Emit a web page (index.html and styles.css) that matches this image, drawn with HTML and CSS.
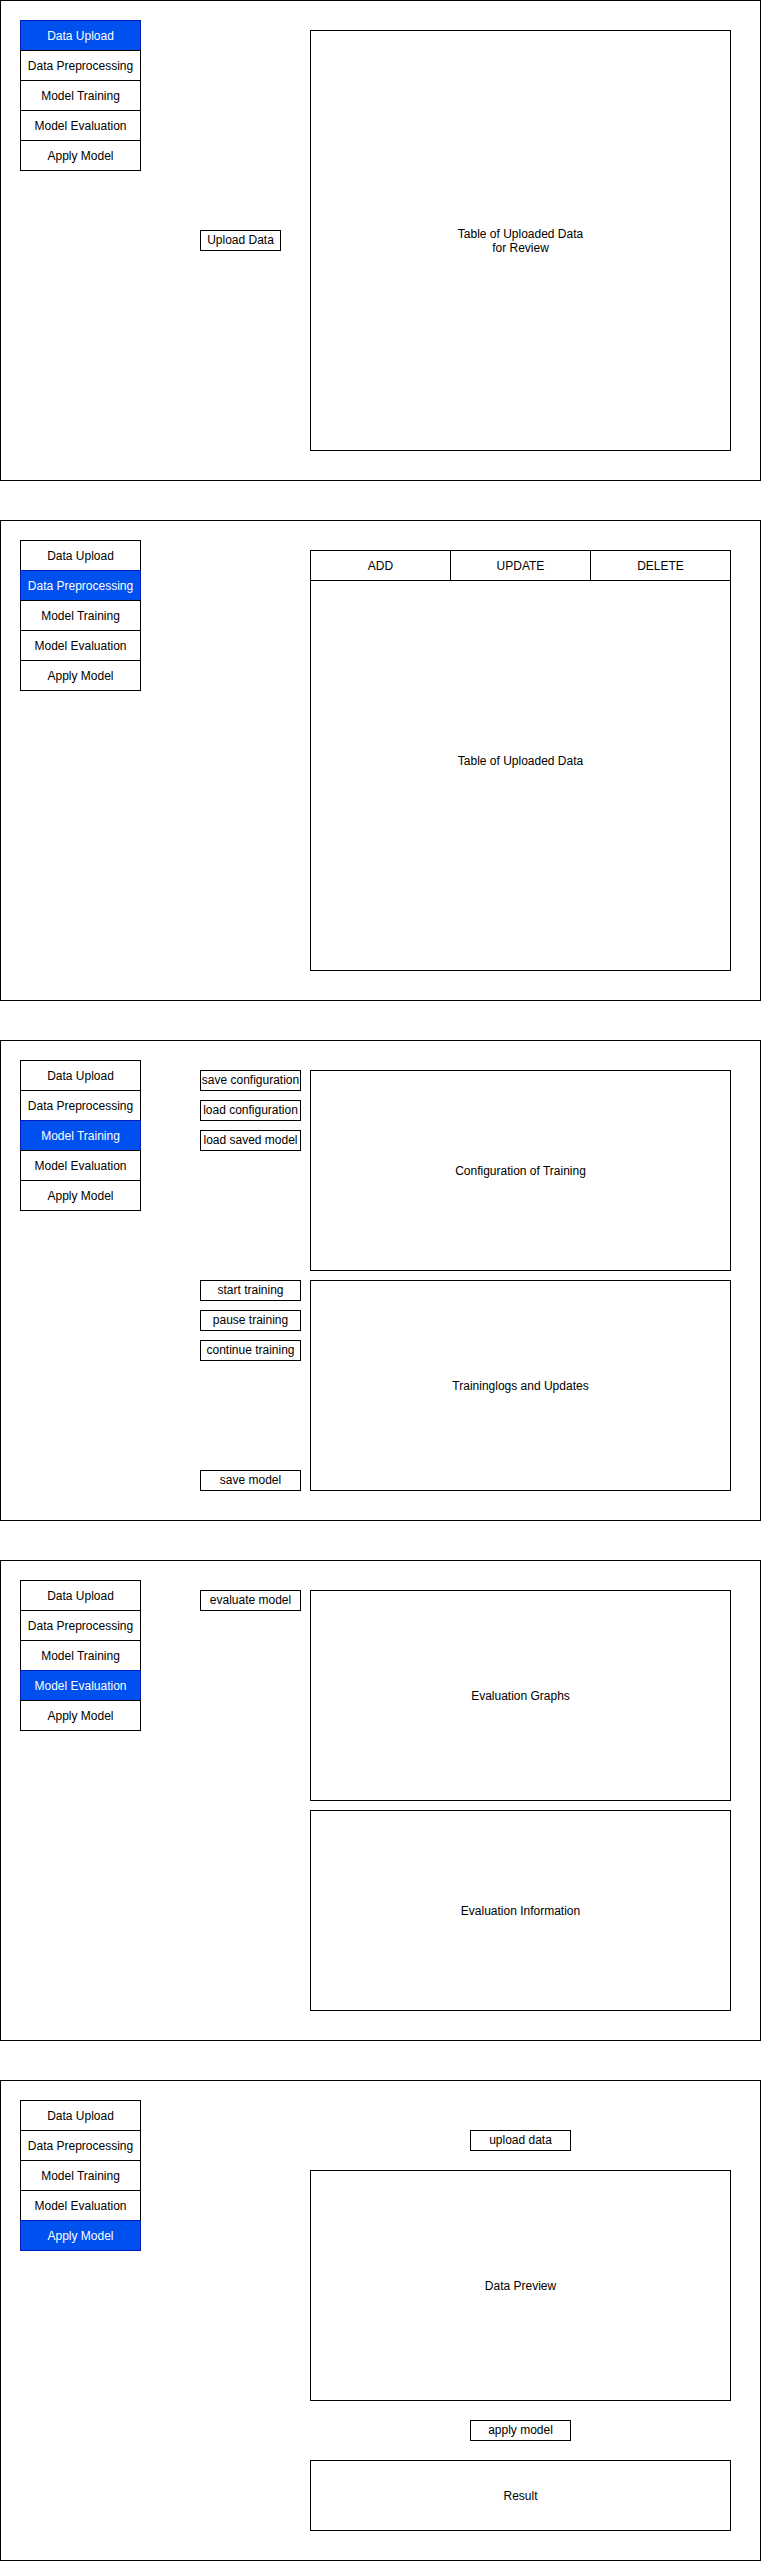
FILE: index.html
```html
<!DOCTYPE html>
<html lang="en">
<head>
  <meta charset="UTF-8">
  <title>Model Workbench - Mockup</title>
  <link rel="stylesheet" href="styles.css">
</head>
<body>

  <!-- 1. Data Upload -->
  <div class="frame">
    <div class="menu">
      <div class="menu-item active">Data Upload</div>
      <div class="menu-item">Data Preprocessing</div>
      <div class="menu-item">Model Training</div>
      <div class="menu-item">Model Evaluation</div>
      <div class="menu-item">Apply Model</div>
    </div>
    <div class="actions actions-center">
      <div class="btn btn-small">Upload Data</div>
    </div>
    <div class="content">
      <div class="box box-full">Table of Uploaded Data<br>for Review</div>
    </div>
  </div>

  <!-- 2. Data Preprocessing -->
  <div class="frame">
    <div class="menu">
      <div class="menu-item">Data Upload</div>
      <div class="menu-item active">Data Preprocessing</div>
      <div class="menu-item">Model Training</div>
      <div class="menu-item">Model Evaluation</div>
      <div class="menu-item">Apply Model</div>
    </div>
    <div class="actions"></div>
    <div class="content">
      <div class="table-head">
        <div class="head-cell">ADD</div>
        <div class="head-cell">UPDATE</div>
        <div class="head-cell">DELETE</div>
      </div>
      <div class="box table-body">Table of Uploaded Data</div>
    </div>
  </div>

  <!-- 3. Model Training -->
  <div class="frame">
    <div class="menu">
      <div class="menu-item">Data Upload</div>
      <div class="menu-item">Data Preprocessing</div>
      <div class="menu-item active">Model Training</div>
      <div class="menu-item">Model Evaluation</div>
      <div class="menu-item">Apply Model</div>
    </div>
    <div class="actions">
      <div class="btn-group group-config">
        <div class="btn">save configuration</div>
        <div class="btn">load configuration</div>
        <div class="btn">load saved model</div>
      </div>
      <div class="btn-group group-train">
        <div class="btn">start training</div>
        <div class="btn">pause training</div>
        <div class="btn">continue training</div>
        <div class="btn btn-bottom">save model</div>
      </div>
    </div>
    <div class="content">
      <div class="box box-config">Configuration of Training</div>
      <div class="box box-logs">Traininglogs and Updates</div>
    </div>
  </div>

  <!-- 4. Model Evaluation -->
  <div class="frame">
    <div class="menu">
      <div class="menu-item">Data Upload</div>
      <div class="menu-item">Data Preprocessing</div>
      <div class="menu-item">Model Training</div>
      <div class="menu-item active">Model Evaluation</div>
      <div class="menu-item">Apply Model</div>
    </div>
    <div class="actions">
      <div class="btn">evaluate model</div>
    </div>
    <div class="content">
      <div class="box box-graphs">Evaluation Graphs</div>
      <div class="box box-info">Evaluation Information</div>
    </div>
  </div>

  <!-- 5. Apply Model -->
  <div class="frame">
    <div class="menu">
      <div class="menu-item">Data Upload</div>
      <div class="menu-item">Data Preprocessing</div>
      <div class="menu-item">Model Training</div>
      <div class="menu-item">Model Evaluation</div>
      <div class="menu-item active">Apply Model</div>
    </div>
    <div class="actions"></div>
    <div class="content content-apply">
      <div class="btn">upload data</div>
      <div class="box box-preview">Data Preview</div>
      <div class="btn">apply model</div>
      <div class="box box-result">Result</div>
    </div>
  </div>

</body>
</html>
```

FILE: styles.css
```css
:root {
  --line: #000000;
  --active-fill: #0050ef;
  --active-line: #001dbc;
}

* {
  box-sizing: border-box;
}

body {
  margin: 0;
  width: 761px;
  font-family: "Liberation Sans", Arial, sans-serif;
  font-size: 12px;
  color: #000;
  background: #fff;
}

.frame {
  display: flex;
  align-items: flex-start;
  width: 761px;
  height: 481px;
  padding: 19px 0 0 19px;
  border: 1px solid var(--line);
  margin-bottom: 39px;
}

.frame:last-child {
  margin-bottom: 0;
}

/* side menu */
.menu {
  width: 121px;
  flex-shrink: 0;
}

.menu-item {
  display: flex;
  align-items: center;
  justify-content: center;
  height: 31px;
  border: 1px solid var(--line);
  margin-top: -1px;
  background: #fff;
}

.menu-item:first-child {
  margin-top: 0;
}

.menu-item.active {
  background: var(--active-fill);
  border-color: var(--active-line);
  color: #fff;
}

/* button column */
.actions {
  display: flex;
  flex-direction: column;
  width: 101px;
  height: 421px;
  margin: 10px 0 0 59px;
  flex-shrink: 0;
}

.actions-center {
  justify-content: center;
}

.btn {
  display: flex;
  align-items: center;
  justify-content: center;
  width: 101px;
  height: 21px;
  border: 1px solid var(--line);
  white-space: nowrap;
  padding-bottom: 1px;
}

.btn-small {
  width: 81px;
}

.btn-group {
  display: flex;
  flex-direction: column;
  gap: 9px;
}

.group-config {
  height: 201px;
  margin-bottom: 9px;
}

.group-train {
  height: 211px;
}

.btn-bottom {
  margin-top: auto;
}

/* main area */
.content {
  display: flex;
  flex-direction: column;
  width: 421px;
  margin: 10px 0 0 9px;
  flex-shrink: 0;
}

.box {
  display: flex;
  align-items: center;
  justify-content: center;
  text-align: center;
  line-height: 14px;
  border: 1px solid var(--line);
}

.box-full {
  height: 421px;
}

.table-head {
  display: flex;
  height: 31px;
}

.head-cell {
  display: flex;
  align-items: center;
  justify-content: center;
  width: 141px;
  border: 1px solid var(--line);
  margin-left: -1px;
}

.head-cell:first-child {
  margin-left: 0;
}

.table-body {
  height: 391px;
  margin-top: -1px;
  padding-bottom: 30px;
}

.box-config {
  height: 201px;
  margin-bottom: 9px;
}

.box-logs {
  height: 211px;
}

.box-graphs {
  height: 211px;
  margin-bottom: 9px;
}

.box-info {
  height: 201px;
}

.content-apply {
  align-items: center;
  margin-top: 30px;
}

.content-apply .box {
  width: 421px;
}

.box-preview {
  height: 231px;
  margin: 19px 0;
}

.box-result {
  height: 71px;
  margin-top: 19px;
}
```
